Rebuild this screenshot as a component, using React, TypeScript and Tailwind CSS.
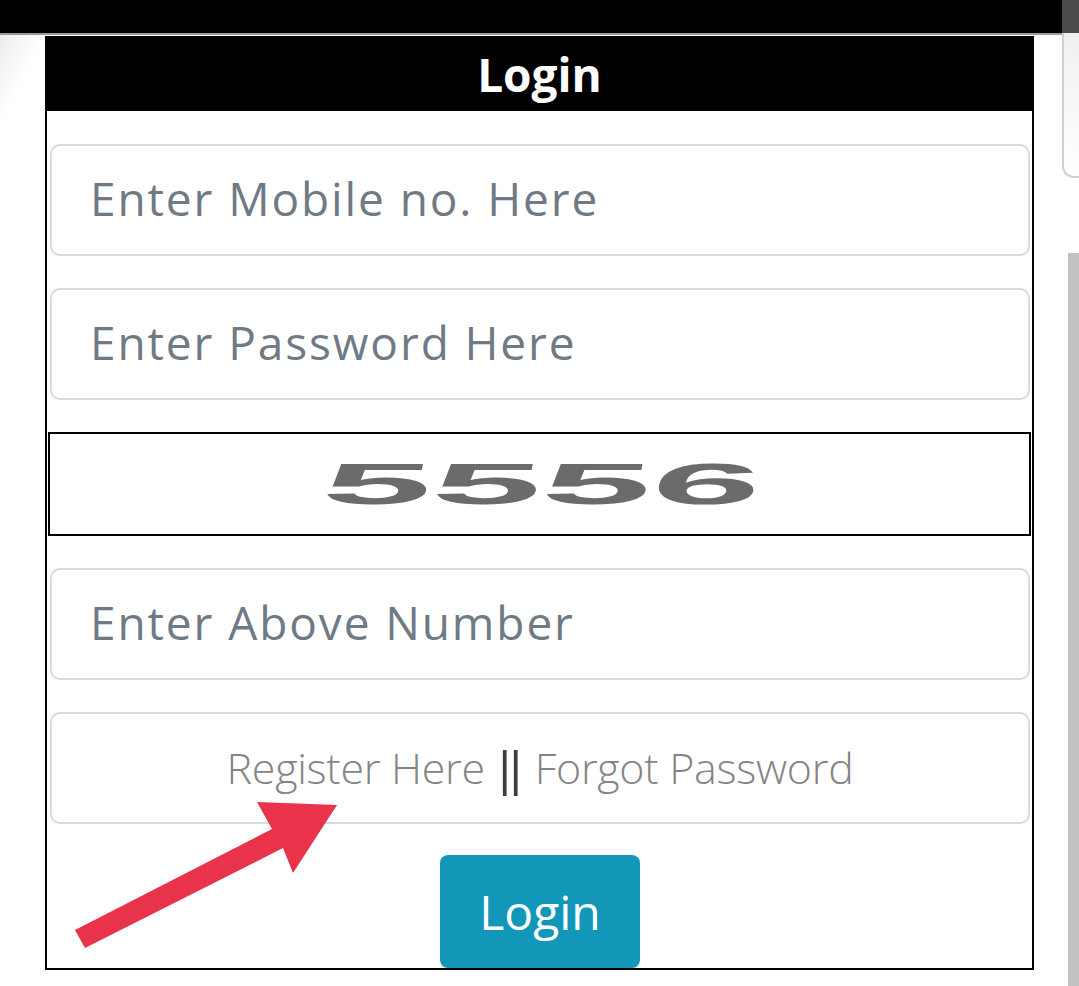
import React from "react";

function Field({ placeholder }: { placeholder: string }) {
  return (
    <div className="h-[112px] rounded-[10px] border-2 border-[#d6dbe1] bg-white flex items-center pl-[38px]">
      <input
        className="w-full bg-transparent outline-none text-[46px] tracking-[1.9px] text-[#5f6b77] placeholder:text-[#6f7a85] -mt-[4px]"
        style={{ fontFamily: '"Open Sans", "Noto Sans", sans-serif' }}
        placeholder={placeholder}
      />
    </div>
  );
}

export default function App() {
  return (
    <div className="relative w-[1079px] h-[986px] overflow-hidden bg-white">
      {/* top bar */}
      <div className="flex h-[33px]">
        <div className="flex-1 bg-black" />
        <div className="w-[17px] bg-[#4a4a4a]" />
      </div>
      <div className="h-[2px] bg-[#9a9a9a]" />

      <div className="flex items-start">
        {/* left shadow gutter */}
        <div className="w-[45px] h-[90px] bg-gradient-to-br from-[#ececec] via-white to-white" />

        {/* card */}
        <div className="w-[989px] mt-[1px] border-2 border-black bg-white">
          <div className="h-[73px] bg-black flex items-center justify-center">
            <span
              className="text-white text-[46px] font-bold leading-none -mt-[2px]"
              style={{ fontFamily: '"Open Sans", sans-serif' }}
            >
              Login
            </span>
          </div>
          <div className="pl-[3px] pr-[2px] pt-[33px] flex flex-col gap-[32px]">
            <Field placeholder="Enter Mobile no. Here" />
            <Field placeholder="Enter Password Here" />
            <div className="-ml-[2px] -mr-[1px] h-[104px] border-2 border-black flex items-center justify-center overflow-hidden">
              <span
                className="inline-block text-[58px] font-bold text-[#6b6b6b] scale-x-[3.4] -skew-x-3 leading-none ml-[6px]"
                style={{ fontFamily: '"Liberation Sans", Arial, sans-serif' }}
              >
                5556
              </span>
            </div>
            <Field placeholder="Enter Above Number" />
            <div
              className="h-[112px] rounded-[10px] border-2 border-[#d6dbe1] flex items-center justify-center text-[43px] font-light text-[#858585] tracking-[-0.3px]"
              style={{ fontFamily: '"Open Sans", sans-serif' }}
            >
              <span>Register Here</span>
              <span
                className="mx-[14px] text-[#3f3f3f] text-[46px] font-normal tracking-[-1px] inline-block scale-y-[1.1]"
                style={{ fontFamily: '"Liberation Sans", Arial, sans-serif' }}
              >
                ||
              </span>
              <span>Forgot Password</span>
            </div>
            <div className="flex justify-center -mt-[1px]">
              <button
                className="w-[200px] h-[113px] rounded-[8px] bg-[#1397b9] text-white text-[48px] leading-none"
                style={{ fontFamily: '"Open Sans", sans-serif' }}
              >
                Login
              </button>
            </div>
          </div>
        </div>

        {/* right edge */}
        <div className="flex-1 flex flex-col items-end">
          <div className="w-[17px] h-[145px] mt-[-2px] rounded-bl-[12px] border-l-2 border-b-2 border-[#d0d0d0] bg-gradient-to-b from-[#f0f0f0] to-white" />
          <div className="w-[11px] h-[740px] mt-[75px] bg-[#c2c2c2]" />
        </div>
      </div>

      {/* red arrow */}
      <svg className="absolute left-0 top-0 pointer-events-none" width="1079" height="986">
        <polygon
          points="75,930 272,829 257,802 337,805 293,873 283,848 85,948"
          fill="#e8334a"
        />
      </svg>
    </div>
  );
}
